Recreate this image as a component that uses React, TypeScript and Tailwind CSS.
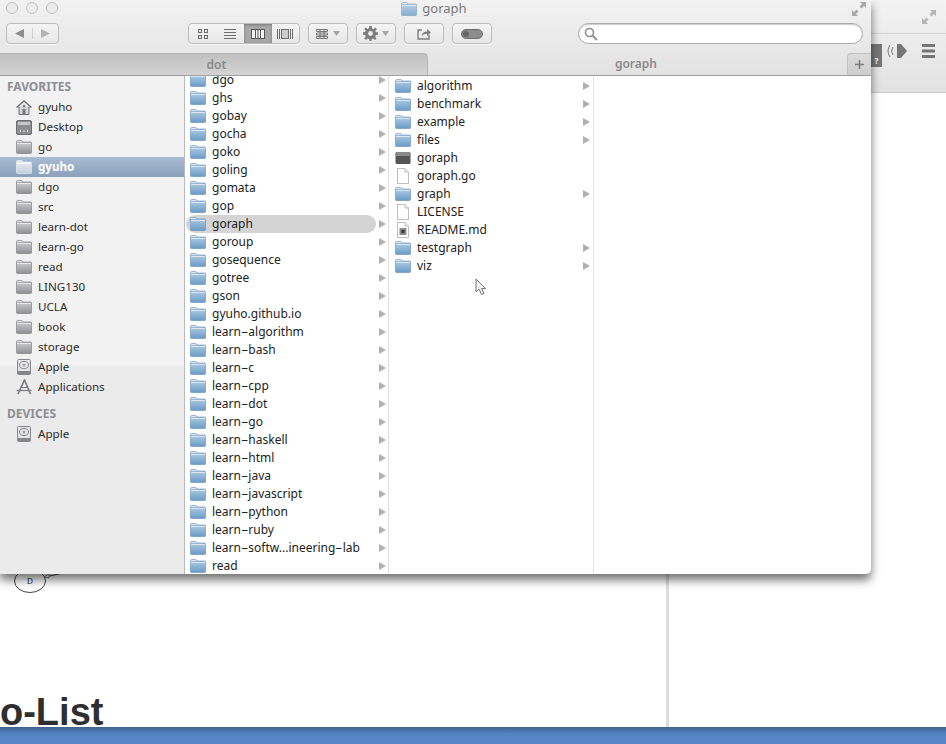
import type { ReactNode } from "react";

type Kind = "folder" | "exec" | "file" | "readme";
type Row = { name: string; kind: Kind; more?: boolean };

const FONT = "font-['Noto_Sans','DejaVu_Sans',sans-serif]";

const SIDEBAR: { name: string; icon: string; active?: boolean }[] = [
  { name: "gyuho", icon: "home" },
  { name: "Desktop", icon: "desktop" },
  { name: "go", icon: "folder" },
  { name: "gyuho", icon: "folder", active: true },
  { name: "dgo", icon: "folder" },
  { name: "src", icon: "folder" },
  { name: "learn-dot", icon: "folder" },
  { name: "learn-go", icon: "folder" },
  { name: "read", icon: "folder" },
  { name: "LING130", icon: "folder" },
  { name: "UCLA", icon: "folder" },
  { name: "book", icon: "folder" },
  { name: "storage", icon: "folder" },
  { name: "Apple", icon: "disk" },
  { name: "Applications", icon: "apps" },
];

const DOT_FOLDERS = [
  "dgo", "ghs", "gobay", "gocha", "goko", "goling", "gomata", "gop", "goraph", "goroup",
  "gosequence", "gotree", "gson", "gyuho.github.io", "learn-algorithm", "learn-bash", "learn-c",
  "learn-cpp", "learn-dot", "learn-go", "learn-haskell", "learn-html", "learn-java",
  "learn-javascript", "learn-python", "learn-ruby", "learn-softw...ineering-lab", "read",
];

const GORAPH_ITEMS: Row[] = [
  { name: "algorithm", kind: "folder", more: true },
  { name: "benchmark", kind: "folder", more: true },
  { name: "example", kind: "folder", more: true },
  { name: "files", kind: "folder", more: true },
  { name: "goraph", kind: "exec" },
  { name: "goraph.go", kind: "file" },
  { name: "graph", kind: "folder", more: true },
  { name: "LICENSE", kind: "file" },
  { name: "README.md", kind: "readme" },
  { name: "testgraph", kind: "folder", more: true },
  { name: "viz", kind: "folder", more: true },
];

function Gradients() {
  return (
    <svg className="absolute h-0 w-0">
      <defs>
        <linearGradient id="blueFolder" x1="0" y1="0" x2="0" y2="1">
          <stop offset="0" stopColor="#a9c8e2" />
          <stop offset="1" stopColor="#6b9ac6" />
        </linearGradient>
        <linearGradient id="grayFolder" x1="0" y1="0" x2="0" y2="1">
          <stop offset="0" stopColor="#c8c8ca" />
          <stop offset="1" stopColor="#8f9094" />
        </linearGradient>
        <linearGradient id="whiteFolder" x1="0" y1="0" x2="0" y2="1">
          <stop offset="0" stopColor="#e4e9f0" />
          <stop offset="1" stopColor="#c5d0de" />
        </linearGradient>
      </defs>
    </svg>
  );
}

function Folder({ tone = "blue", className = "" }: { tone?: "blue" | "gray" | "white"; className?: string }) {
  const stroke = tone === "blue" ? "#5f8fbc" : tone === "gray" ? "#77787c" : "#eef2f7";
  return (
    <svg width="16" height="14" viewBox="0 0 16 14" className={`shrink-0 ${className}`}>
      <path d="M.5 3V1.5Q.5.5 1.5.5H6L7 2H14.5Q15.5 2 15.5 3Z" fill="#dfe6ee" stroke={stroke} strokeWidth=".6" />
      <rect x=".5" y="2.8" width="15" height="10.7" rx=".8" fill={`url(#${tone}Folder)`} stroke={stroke} strokeWidth=".6" />
      <path d="M1 3.4H15" stroke="#fff" strokeOpacity=".75" />
    </svg>
  );
}

function ItemIcon({ kind }: { kind: Kind }) {
  if (kind === "folder") return <Folder />;
  if (kind === "exec") {
    return (
      <svg width="16" height="14" viewBox="0 0 16 14" className="shrink-0">
        <rect x=".5" y="1" width="15" height="12" rx="1.5" fill="#555" />
        <rect x=".5" y="1" width="15" height="4" rx="1.5" fill="#8a8a8a" />
      </svg>
    );
  }
  return (
    <svg width="16" height="16" viewBox="0 0 16 16" className="shrink-0">
      <path d="M2.5.5H10L13.5 4V15.5H2.5Z" fill="#fff" stroke="#bdbdbd" />
      <path d="M10 .5V4H13.5" fill="#eee" stroke="#bdbdbd" />
      {kind === "readme" && (
        <>
          <rect x="4.5" y="6" width="7" height="7" fill="#8a8a8a" />
          <rect x="6.5" y="8" width="3" height="3" fill="#333" />
        </>
      )}
    </svg>
  );
}

function Arrow() {
  return (
    <svg width="7" height="8" viewBox="0 0 7 8" className="shrink-0">
      <path d="M0 0L7 4L0 8Z" fill="#b0b0b0" />
    </svg>
  );
}

function SidebarIcon({ icon, active }: { icon: string; active?: boolean }) {
  if (icon === "folder") return <Folder tone={active ? "white" : "gray"} />;
  if (icon === "home") {
    return (
      <svg width="16" height="15" viewBox="0 0 16 15" fill="none" stroke="#6d6e72" className="shrink-0">
        <path d="M.5 7.5L8 1L15.5 7.5" strokeWidth="1.4" />
        <path d="M3 6.5V14.5H13V6.5" fill="#d4d4d6" />
        <rect x="6.5" y="9" width="3" height="5.5" fill="#77787c" stroke="none" />
        <circle cx="8" cy="6" r="1.3" fill="#77787c" stroke="none" />
      </svg>
    );
  }
  if (icon === "desktop") {
    return (
      <svg width="16" height="15" viewBox="0 0 16 15" className="shrink-0">
        <rect x=".5" y=".5" width="15" height="14" rx="1.5" fill="#8c8d91" stroke="#6f7074" />
        <rect x="2" y="2" width="12" height="3" fill="#c6c6c8" />
        <path d="M4 11H5M7.5 11H8.5M11 11H12" stroke="#fff" strokeWidth="1.4" />
      </svg>
    );
  }
  if (icon === "disk") {
    return (
      <svg width="14" height="16" viewBox="0 0 14 16" className="ml-px mr-px shrink-0">
        <rect x=".5" y=".5" width="13" height="15" rx="1" fill="#e4e4e6" stroke="#85868a" />
        <ellipse cx="7" cy="6" rx="4.5" ry="3.6" fill="none" stroke="#8b8c90" />
        <circle cx="7" cy="6" r="1.3" fill="#9a9b9f" />
        <rect x="1" y="12" width="12" height="3" fill="#85868a" />
      </svg>
    );
  }
  return (
    <svg width="16" height="16" viewBox="0 0 16 16" fill="none" stroke="#77787c" strokeWidth="1.6" className="shrink-0">
      <path d="M2 15L8.5 1L14.5 15" />
      <path d="M.5 11.5H15.5" strokeWidth="1.2" />
      <path d="M4.5 8.5H11.5" strokeWidth="1" />
    </svg>
  );
}

function ToolButton({ className = "", children }: { className?: string; children: ReactNode }) {
  return (
    <div className={`flex h-[21px] items-center justify-center rounded-[4px] border border-[#bdbdbd] bg-gradient-to-b from-[#f4f4f4] to-[#e8e8e8] shadow-[0_1px_0_#f8f8f8] ${className}`}>
      {children}
    </div>
  );
}

function Caret() {
  return (
    <svg width="7" height="5" viewBox="0 0 7 5" className="shrink-0">
      <path d="M0 0H7L3.5 5Z" fill="#a5a5a5" />
    </svg>
  );
}

function Expand({ color = "#a9a9a9" }: { color?: string }) {
  return (
    <svg width="14" height="14" viewBox="0 0 14 14" fill={color}>
      <path d="M8 0H14V6L12 4L9.5 6.5L7.5 4.5L10 2Z" />
      <path d="M0 14V8L2 10L4.5 7.5L6.5 9.5L4 12L6 14Z" />
    </svg>
  );
}

function TitleBar() {
  return (
    <div className="relative flex h-[23px] shrink-0 items-center justify-center">
      <div className="absolute left-[6px] top-[2px] flex gap-2">
        {[0, 1, 2].map((i) => (
          <span key={i} className="h-3 w-3 rounded-full border border-[#c2c2c2] bg-[#ececec]" />
        ))}
      </div>
      <div className="ml-[-3px] flex items-center gap-[5px] pb-[5px] text-[13px] text-[#7b7b7b]">
        <Folder className="opacity-80" />
        <span>goraph</span>
      </div>
      <div className="absolute right-[5px] top-[2px]">
        <Expand />
      </div>
    </div>
  );
}

function Toolbar() {
  return (
    <div className="flex h-[30px] shrink-0 items-start pl-[6px] pr-2">
      <ToolButton className="w-[53px] gap-0">
        <div className="flex flex-1 justify-center border-r border-[#d0d0d0]">
          <svg width="11" height="11" viewBox="0 0 11 11"><path d="M10 1V10L1 5.5Z" fill="#8e8e8e" /></svg>
        </div>
        <div className="flex flex-1 justify-center">
          <svg width="11" height="11" viewBox="0 0 11 11"><path d="M1 1V10L10 5.5Z" fill="#b5b5b5" /></svg>
        </div>
      </ToolButton>
      <ToolButton className="ml-[129px] w-[112px] overflow-hidden">
        <div className="flex h-full flex-1 items-center justify-center">
          <svg width="12" height="12" viewBox="0 0 12 12" fill="none" stroke="#6d6d6d">
            <rect x="1.5" y="1.5" width="3" height="3" /><rect x="7.5" y="1.5" width="3" height="3" />
            <rect x="1.5" y="7.5" width="3" height="3" /><rect x="7.5" y="7.5" width="3" height="3" />
          </svg>
        </div>
        <div className="flex h-full flex-1 items-center justify-center">
          <svg width="12" height="10" viewBox="0 0 12 10" stroke="#6d6d6d"><path d="M0 .5H12M0 3.5H12M0 6.5H12M0 9.5H12" /></svg>
        </div>
        <div className="flex h-full flex-1 items-center justify-center bg-[#a8a8a8] shadow-[inset_0_1px_3px_#777]">
          <svg width="14" height="10" viewBox="0 0 14 10" fill="#f4f4f4" stroke="#555">
            <rect x=".5" y=".5" width="13" height="9" /><path d="M4.5 .5V9.5M7 .5V9.5M9.5 .5V9.5" />
          </svg>
        </div>
        <div className="flex h-full flex-1 items-center justify-center">
          <svg width="16" height="10" viewBox="0 0 16 10" fill="none" stroke="#6d6d6d">
            <rect x="4.5" y=".5" width="7" height="9" fill="#ccc" /><path d="M.5 0V10M2.5 0V10M13.5 0V10M15.5 0V10" />
          </svg>
        </div>
      </ToolButton>
      <ToolButton className="ml-2 w-10 gap-[5px]">
        <svg width="12" height="10" viewBox="0 0 12 10" fill="none" stroke="#6d6d6d" strokeWidth=".9">
          <path d="M.5 .5H11.5V2.5H.5ZM.5 4H11.5V6H.5ZM.5 7.5H11.5V9.5H.5ZM4 .5V9.5M8 .5V9.5" />
        </svg>
        <Caret />
      </ToolButton>
      <ToolButton className="ml-2 w-10 gap-[4px]">
        <svg width="15" height="15" viewBox="0 0 15 15" fill="#7d7d7d">
          <path d="M6.3 0H8.7L9 2.4L10.6 3L12.5 1.6L13.9 3.3L12.2 4.9L12.9 6.3H15V8.7L12.8 9L12.2 10.5L13.6 12.4L12 14L10.3 12.4L8.8 13L8.6 15H6.4L6.1 13L4.6 12.4L3 14L1.3 12.4L2.7 10.5L2.1 9L0 8.7V6.3L2.1 6L2.7 4.6L1.2 3L2.9 1.4L4.5 2.9L6 2.3Z" />
          <circle cx="7.5" cy="7.5" r="2.4" fill="#eee" />
        </svg>
        <Caret />
      </ToolButton>
      <ToolButton className="ml-2 w-10">
        <svg width="15" height="13" viewBox="0 0 15 13" fill="none" stroke="#808080" strokeWidth="1.4">
          <path d="M5 3H1V12H12V8" />
          <path d="M4.5 9C5 6 7 4.5 10 4.5V2L14 5.5L10 9V6.8C8 6.8 6 7.5 4.5 9Z" fill="#808080" stroke="none" />
        </svg>
      </ToolButton>
      <ToolButton className="ml-2 w-10">
        <span className="flex h-[10px] w-[22px] items-center rounded-full border border-[#6e6e6e] bg-[#8d8d8d] pl-[1px]">
          <span className="h-[6px] w-[6px] rounded-full bg-[#666]" />
        </span>
      </ToolButton>
      <div className="ml-[86px] flex h-[21px] w-[285px] items-center rounded-full border border-[#a9a9a9] bg-white pl-[5px] shadow-[inset_0_1px_1px_#ccc]">
        <svg width="14" height="14" viewBox="0 0 14 14" fill="none" stroke="#8e8e8e" strokeWidth="1.6">
          <circle cx="5.5" cy="5.5" r="4" />
          <path d="M8.5 8.5L13 13" strokeWidth="2" />
        </svg>
      </div>
    </div>
  );
}

function TabBar() {
  return (
    <div className="flex h-[23px] shrink-0 border-b border-[#9f9f9f] text-[12px] font-semibold text-[#8a8a8a]">
      <div className="flex w-[428px] items-center justify-center rounded-tr-[5px] border-r border-t border-[#b5b5b5] bg-gradient-to-b from-[#c0c0c0] to-[#d4d4d4] pl-[6px]">
        dot
      </div>
      <div className="flex flex-1 items-center justify-center pr-[3px]">goraph</div>
      <div className="flex w-6 items-center justify-center rounded-tl-[4px] border-l border-t border-[#c2c2c2] bg-gradient-to-b from-[#dcdcdc] to-[#cdcdcd]">
        <svg width="9" height="9" viewBox="0 0 9 9" stroke="#7d7d7d" strokeWidth="1.6"><path d="M4.5 0V9M0 4.5H9" /></svg>
      </div>
    </div>
  );
}

function Sidebar() {
  return (
    <div className="w-[185px] shrink-0 border-r border-[#b9b9b9] bg-[linear-gradient(#f2f2f2_0,#f2f2f2_290px,#ebebeb_290px)] text-[11.6px] text-[#2a2a2a]">
      <div className="flex h-[21px] items-end pb-[1px] pl-[7px] text-[12px] font-bold text-[#8d8f94]">FAVORITES</div>
      {SIDEBAR.map((item, i) => (
        <div
          key={i}
          className={`flex h-5 items-center gap-[6px] pl-[16px] ${item.active ? "bg-gradient-to-b from-[#a9bbd1] to-[#8ba1bc] font-bold text-white" : ""}`}
        >
          <SidebarIcon icon={item.icon} active={item.active} />
          <span>{item.name}</span>
        </div>
      ))}
      <div className="flex h-[27px] items-end pb-[1px] pl-[7px] text-[12px] font-bold text-[#8d8f94]">DEVICES</div>
      <div className="flex h-5 items-center gap-[6px] pl-[16px]">
        <SidebarIcon icon="disk" />
        <span>Apple</span>
      </div>
    </div>
  );
}

// the hyphens in the learn-* names are drawn longer in the screenshot
function LongHyphens({ name }: { name: string }) {
  const parts = name.split("-");
  return (
    <>
      {parts.map((part, i) => (
        <span key={i}>
          {part}
          {i < parts.length - 1 && <span className="mr-[3.5px] inline-block origin-left scale-x-[1.9]">-</span>}
        </span>
      ))}
    </>
  );
}

function DotColumn() {
  return (
    <div className="w-[204px] shrink-0 overflow-hidden border-r border-[#dedede] bg-white text-[12px] text-[#222]">
      <div className="-mt-[5px]">
        {DOT_FOLDERS.map((name) => (
          <div key={name} className="ml-px flex h-[18px] items-center">
            <div className={`flex h-full w-[190px] items-center rounded-full pl-1 ${name === "goraph" ? "bg-[#d4d4d4]" : ""}`}>
              <Folder />
              <span className="ml-[6px] whitespace-nowrap"><LongHyphens name={name} /></span>
            </div>
            <span className="ml-[3px]"><Arrow /></span>
          </div>
        ))}
      </div>
    </div>
  );
}

function GoraphColumn() {
  return (
    <div className="relative w-[205px] shrink-0 border-r border-[#e2e2e2] bg-white pt-[1px] text-[12px] text-[#222]">
      {GORAPH_ITEMS.map((item) => (
        <div key={item.name} className="flex h-[18px] items-center pl-[6px] pr-[3px]">
          <div className="flex w-[16px] justify-center"><ItemIcon kind={item.kind} /></div>
          <span className="ml-[6px] flex-1">{item.name}</span>
          {item.more && <Arrow />}
        </div>
      ))}
      <svg width="12" height="18" viewBox="0 0 12 18" className="absolute left-[86px] top-[202px]">
        <path d="M1 1V14L4 11L6.5 16.5L9 15.5L6.5 10.5H10.5Z" fill="#f4f4f4" stroke="#777" />
      </svg>
    </div>
  );
}

function FinderWindow() {
  return (
    <div className={`absolute left-0 top-0 flex h-[574px] w-[871px] flex-col overflow-hidden rounded-br-[5px] bg-white shadow-[0_6px_10px_rgba(0,0,0,0.55)] ${FONT}`}>
      <div className="bg-gradient-to-b from-[#f2f2f2] to-[#e2e2e2]">
        <TitleBar />
        <Toolbar />
        <TabBar />
      </div>
      <div className="flex min-h-0 flex-1">
        <Sidebar />
        <DotColumn />
        <GoraphColumn />
      </div>
    </div>
  );
}

function BrowserBehind() {
  return (
    <div className="flex h-[744px] flex-col bg-white">
      <div className="flex min-h-0 flex-1">
        <div className="relative flex w-[666px] flex-col justify-end">
          <svg width="60" height="30" viewBox="0 0 60 30" className="absolute left-[10px] top-[566px]">
            <ellipse cx="20" cy="15" rx="15.5" ry="11.5" fill="none" stroke="#444" />
            <text x="20" y="18" textAnchor="middle" fontSize="8" fontFamily="Liberation Serif, serif" fill="#222">D</text>
            <path d="M35 11L58 6" stroke="#444" />
            <path d="M34 11L39 8L39 12Z" fill="#fff" stroke="#444" strokeWidth=".6" />
          </svg>
          <h1 className="whitespace-nowrap font-['Liberation_Sans',sans-serif] text-[38px] font-bold leading-[30px] text-[#2f2f2f]">o-List</h1>
        </div>
        <div className="w-[280px] border-l-[3px] border-[#dcdcdc]" />
      </div>
      <div className="h-[17px] shrink-0 bg-gradient-to-b from-[#3f628f] via-[#5585c5] via-40% to-[#5585c5]" />
      <div className="absolute right-0 top-0 flex h-[93px] w-[100px] flex-col border-b border-[#c9c9c9] bg-gradient-to-b from-[#f3f3f3] to-[#e2e2e2]">
        <div className="flex h-[34px] items-center justify-end border-b border-[#d2d2d2] pr-[10px]">
          <Expand color="#b5b5b5" />
        </div>
        <div className="flex items-center justify-end gap-[14px] pr-[11px] pt-2">
          <svg width="22" height="18" viewBox="0 0 22 18" fill="#777">
            <path d="M11 2H15L21 9L15 16H11Z" />
            <path d="M7 5Q4 9 7 13M4 3Q0 9 4 15" fill="none" stroke="#777" />
          </svg>
          <svg width="13" height="14" viewBox="0 0 13 14" fill="#777">
            <path d="M0 0H13V3H0ZM0 5.5H13V8.5H0ZM0 11H13V14H0Z" />
          </svg>
        </div>
      </div>
      <div className="absolute left-[871px] top-[44px] flex h-[23px] w-[11px] items-end justify-center bg-[#777] pb-[1px] text-[8px] font-bold leading-[10px] text-white">?</div>
    </div>
  );
}

export default function App() {
  return (
    <div className="relative h-[744px] w-[946px] overflow-hidden">
      <Gradients />
      <BrowserBehind />
      <FinderWindow />
    </div>
  );
}
